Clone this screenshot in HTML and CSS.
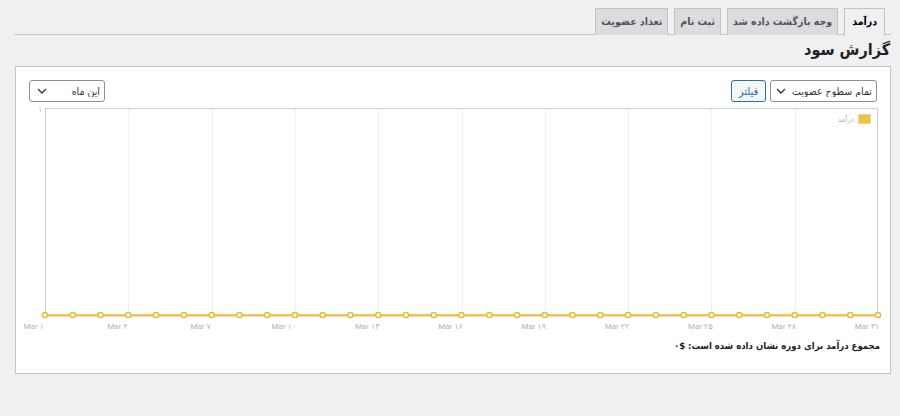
FILE: index.html
```html
<!DOCTYPE html>
<html lang="fa" dir="rtl">
<head>
  <meta charset="UTF-8" />
  <meta name="viewport" content="width=device-width, initial-scale=1.0">
  <title>گزارش سود</title>
  <link rel="stylesheet" href="styles.css">
</head>
<body>
  <div class="wrap">
    <nav class="tabs">
      <a class="tab active" href="#">درآمد</a>
      <a class="tab" href="#">وجه بازگشت داده شد</a>
      <a class="tab" href="#">ثبت نام</a>
      <a class="tab" href="#">تعداد عضویت</a>
    </nav>
    <h1 class="title">گزارش سود</h1>
    <div class="panel">
      <div class="toolbar">
        <div class="filters">
          <label class="select wide">
            <select>
              <option>تمام سطوح عضویت</option>
            </select>
            <svg class="chev" width="10" height="6" viewBox="0 0 10 6"><path d="M1 1l4 4 4-4" fill="none" stroke="#2c3338" stroke-width="1.3"/></svg>
          </label>
          <button class="btn">فیلتر</button>
        </div>
        <label class="select period">
          <select>
            <option>این ماه</option>
          </select>
          <svg class="chev" width="10" height="6" viewBox="0 0 10 6"><path d="M1 1l4 4 4-4" fill="none" stroke="#2c3338" stroke-width="1.3"/></svg>
        </label>
      </div>
      <div class="chart">
        <svg id="chart" width="874" height="230" viewBox="0 0 874 230"></svg>
      </div>
      <p class="total">مجموع درآمد برای دوره نشان داده شده است: $۰</p>
    </div>
  </div>
  <script>
    // daily revenue for the month, all zero
    const days = 31;
    const plot = { left: 29, right: 862, top: 4, bottom: 211 };
    const step = (plot.right - plot.left) / (days - 1);
    const fa = n => String(n).replace(/\d/g, d => '۰۱۲۳۴۵۶۷۸۹'[d]);
    const ns = 'http://www.w3.org/2000/svg';
    const svg = document.getElementById('chart');

    function add(tag, attrs, text) {
      const el = document.createElementNS(ns, tag);
      for (const k in attrs) el.setAttribute(k, attrs[k]);
      if (text !== undefined) el.textContent = text;
      svg.appendChild(el);
      return el;
    }

    // grid every 3 days
    for (let i = 3; i < days - 1; i += 3) {
      const x = Math.round(plot.left + i * step) + 0.5;
      add('line', { x1: x, y1: plot.top, x2: x, y2: plot.bottom, stroke: '#efefef', 'stroke-width': 1 });
    }
    add('rect', { x: plot.left + 0.5, y: plot.top + 0.5, width: plot.right - plot.left - 1, height: plot.bottom - plot.top, fill: 'none', stroke: '#cfcfcf' });

    // axis labels
    add('text', { x: 26, y: plot.top + 4, class: 'ylabel' }, fa(1));
    add('text', { x: 26, y: plot.bottom + 3, class: 'ylabel' }, fa(0));
    for (let i = 0; i < days; i += 3) {
      add('text', { x: plot.left + i * step - 11, y: plot.bottom + 14, class: 'xlabel' }, 'Mar ' + fa(i + 1));
    }

    // revenue line
    add('line', { x1: plot.left, y1: plot.bottom + 1, x2: plot.right, y2: plot.bottom + 1, stroke: '#a89060', 'stroke-width': 2, opacity: 0.3 });
    add('line', { x1: plot.left, y1: plot.bottom, x2: plot.right, y2: plot.bottom, stroke: '#ecc94b', 'stroke-width': 2 });
    for (let i = 0; i < days; i++) {
      add('circle', { cx: plot.left + i * step, cy: plot.bottom, r: 2.6, fill: '#fff', stroke: '#e6be35', 'stroke-width': 1.5 });
    }

    // legend
    add('rect', { x: 842.5, y: 10.5, width: 12, height: 9, fill: '#f0c33c', stroke: '#e3d7a8', 'stroke-width': 1 });
    add('text', { x: 838, y: 18, class: 'legend' }, 'درآمد');
  </script>
</body>
</html>
```

FILE: styles.css
```css
* {
  box-sizing: border-box;
}
body {
  margin: 0;
  background: #f0f0f1;
  color: #1d2327;
  font-family: "DejaVu Sans Condensed", "DejaVu Sans", sans-serif;
  font-size: 12px;
}
.wrap {
  padding: 8px 9px 0 15px;
}
.tabs {
  display: flex;
  gap: 6px;
  padding-right: 6px;
  margin-left: -1px;
  border-bottom: 1px solid #c3c4c7;
  height: 27px;
}
.tab {
  display: block;
  height: 27px;
  padding: 0 5px;
  line-height: 25px;
  font-size: 10.5px;
  font-weight: bold;
  color: #50575e;
  text-decoration: none;
  background: #dcdcde;
  border: 1px solid #c3c4c7;
  border-bottom: none;
}
.tab.active {
  background: #f0f0f1;
  color: #000;
  height: 28px;
  padding: 0 7px;
}
.title {
  margin: 3px 1px 0 0;
  font-size: 16px;
  font-weight: bold;
  line-height: 24px;
  color: #1d2327;
}
.panel {
  margin-top: 4px;
  background: #fff;
  border: 1px solid #c3c4c7;
  height: 308px;
}
.toolbar {
  display: flex;
  justify-content: space-between;
  align-items: center;
  padding: 13px 13px 0 13px;
}
.filters {
  display: flex;
  gap: 4px;
}
.select {
  position: relative;
  display: block;
}
.select select {
  appearance: none;
  -webkit-appearance: none;
  height: 22px;
  border: 1px solid #8c8f94;
  border-radius: 3px;
  background: #fff;
  font-family: inherit;
  font-size: 10.5px;
  color: #2c3338;
  padding: 0 4px 0 18px;
  direction: rtl;
}
.select.wide select {
  width: 107px;
}
.select.period select {
  width: 76px;
}
.chev {
  position: absolute;
  left: 6px;
  top: 8px;
  pointer-events: none;
}
.select.period .chev {
  left: 8px;
}
.btn {
  height: 22px;
  width: 35px;
  padding: 0;
  border: 1px solid #2271b1;
  border-radius: 3px;
  background: #f6f7f7;
  color: #2271b1;
  font-family: inherit;
  font-size: 11px;
}
.chart {
  margin-top: 2px;
  height: 230px;
}
.chart svg {
  display: block;
  direction: ltr;
}
.ylabel {
  font-size: 7px;
  fill: #aaa;
  text-anchor: end;
}
.xlabel {
  font-family: "Roboto", "DejaVu Sans", sans-serif;
  font-size: 8px;
  fill: #b3b3b3;
  text-anchor: middle;
}
.legend {
  font-size: 8px;
  fill: #b5b5b5;
  text-anchor: end;
}
.total {
  margin: 6px 10px 0 0;
  font-size: 9.5px;
  font-weight: bold;
  color: #1d2327;
}
```
